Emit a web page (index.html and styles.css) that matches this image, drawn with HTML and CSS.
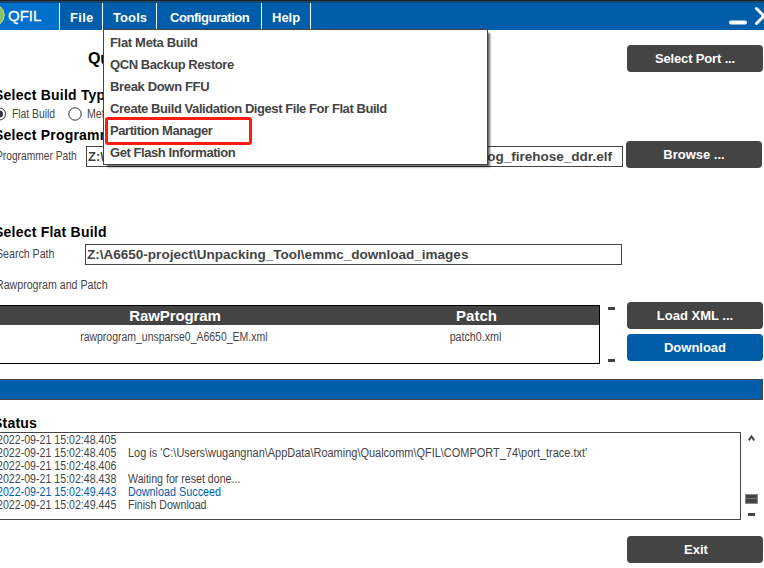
FILE: index.html
```html
<!DOCTYPE html>
<html lang="en">
<head>
<meta charset="utf-8">
<title>QFIL</title>
<link rel="stylesheet" href="styles.css">
</head>
<body>
<div class="window">
  <header class="titlebar">
    <div class="brand"><svg class="logo" width="5" height="26" viewBox="0 0 5 26"><ellipse cx="-5" cy="12" rx="9.5" ry="10.5" fill="#8dc163"/><path d="M0 4Q4 7 4.3 12Q4.300 17 0 21" fill="none" stroke="#b5d9a0"/></svg><span class="t-brand">QFIL</span></div>
    <nav class="menubar">
      <div class="menu m-file"><span>File</span></div>
      <div class="menu m-tools"><span>Tools</span>
        <div class="dropdown">
          <div class="item"><span class="d1">Flat Meta Build</span></div>
          <div class="item"><span class="d2">QCN Backup Restore</span></div>
          <div class="item"><span class="d3">Break Down FFU</span></div>
          <div class="item"><span class="d4">Create Build Validation Digest File For Flat Build</span></div>
          <div class="item marked"><span class="d5">Partition Manager</span></div>
          <div class="item"><span class="d6">Get Flash Information</span></div>
        </div>
      </div>
      <div class="menu m-conf"><span>Configuration</span></div>
      <div class="menu m-help"><span>Help</span></div>
    </nav>
    <svg class="controls" width="36" height="27" viewBox="0 0 36 27" fill="none" stroke="#fff" stroke-linecap="round"><path d="M3 19.500H17" stroke-width="4"/><path d="M28.500 5.500L36 13L28.500 20.500M43.500 5.500L36 13L43.500 20.500" stroke-width="3"/></svg>
  </header>

  <main class="page">
    <div class="row title-row"><h1>Qualcomm</h1><button class="btn b-port"><span>Select Port ...</span></button></div>
    <h2 class="h-type">Select Build Type</h2>
    <div class="row radios">
      <svg width="13" height="14" viewBox="0 0 13 14"><circle cx="6.500" cy="7" r="6" fill="#fff" stroke="#333"/><circle cx="6.500" cy="7" r="3.500" fill="#333"/></svg>
      <span class="r1 narrow">Flat Build</span>
      <svg width="14" height="14" viewBox="0 0 14 14"><circle cx="7" cy="7" r="6.200" fill="#fff" stroke="#333"/></svg>
      <span class="r2 narrow">Meta</span>
    </div>
    <h2 class="h-prog">Select Programmer</h2>
    <div class="row prog-row">
      <label class="l-prog"><span class="narrow">Programmer Path</span></label>
      <div class="field f-prog"><span>Z:\</span><span class="v-prog">prog_firehose_ddr.elf</span></div>
      <button class="btn b-browse"><span>Browse ...</span></button>
    </div>
    <h2 class="h-flat">Select Flat Build</h2>
    <div class="row search-row">
      <label class="l-search"><span class="narrow">Search Path</span></label>
      <div class="field f-search"><span class="v-search">Z:\A6650-project\Unpacking_Tool\emmc_download_images</span></div>
    </div>
    <div class="l-raw"><span class="narrow">Rawprogram and Patch</span></div>
    <div class="row table-row">
      <div class="table">
        <div class="thead"><span class="c1 th1">RawProgram</span><span class="c2 th2">Patch</span></div>
        <div class="trow"><span class="c1 td1">rawprogram_unsparse0_A6650_EM.xml</span><span class="c2 td2">patch0.xml</span></div>
      </div>
      <div class="ticks"><i class="tick"></i><i class="tick"></i></div>
      <div class="actions">
        <button class="btn b-load"><span>Load XML ...</span></button>
        <button class="btn blue b-down"><span>Download</span></button>
      </div>
    </div>
    <div class="progress"></div>
    <h2 class="h-status">Status</h2>
    <div class="row log-row">
      <div class="log">
        <div class="line"><time>2022-09-21 15:02:48.405</time></div>
        <div class="line"><time>2022-09-21 15:02:48.405</time><span class="narrow g1">Log is 'C:\Users\wugangnan\AppData\Roaming\Qualcomm\QFIL\COMPORT_74\port_trace.txt'</span></div>
        <div class="line"><time>2022-09-21 15:02:48.406</time></div>
        <div class="line"><time>2022-09-21 15:02:48.438</time><span class="narrow">Waiting for reset done...</span></div>
        <div class="line ok"><time>2022-09-21 15:02:49.443</time><span class="narrow g3">Download Succeed</span></div>
        <div class="line"><time>2022-09-21 15:02:49.445</time><span class="narrow">Finish Download</span></div>
      </div>
      <div class="scroll">
        <svg width="7" height="6" viewBox="0 0 7 6" fill="none" stroke="#444" stroke-width="2"><path d="M.8 5.300L3.500 1.500L6.200 5.300"/></svg>
        <i class="thumb"></i>
        <i class="tick"></i>
      </div>
    </div>
    <button class="btn b-exit"><span>Exit</span></button>
  </main>
</div>
</body>
</html>
```
FILE: styles.css
```css
*, *::after { box-sizing: border-box; }
body { margin: 0; background: #fff; color: #444; font-family: "Liberation Sans", sans-serif; }
.window { width: 764px; height: 568px; overflow: hidden; }
span, label, time, h1, h2 { white-space: nowrap; }
svg { display: block; flex: none; }

.titlebar { display: flex; height: 30px; background: #005daa; border-top: 1px solid #222; box-shadow: inset 0 2px #124875; padding-top: 2px; color: #fff; }
.brand { display: flex; width: 60px; background: #0070cc; border-right: 1px solid #fff; }
.t-brand { margin-left: 3px; line-height: 26px; font-size: 15px; -webkit-text-stroke: .3px #fff; }
.menubar { display: flex; flex: 1; font: bold 13px/28px "Liberation Sans", sans-serif; }
.menu { position: relative; border-right: 1px solid #fff; height: 27px; }
.menu > span { display: block; margin-top: 1px; }
.m-file { width: 43px; padding-left: 10px; letter-spacing: .3px; }
.m-tools { width: 54px; padding-left: 10px; letter-spacing: .1px; }
.m-conf { width: 105px; padding-left: 13px; letter-spacing: -.45px; }
.m-help { width: 49px; padding-left: 10px; }

.dropdown { position: absolute; z-index: 2; left: 0; top: 26px; width: 385px; height: 136px; padding: 2px 0 0 6px; background: #fff; border: 1px solid #444; box-shadow: 3px 3px 2px -1px rgba(0,0,0,.6); color: #444; line-height: 22px; letter-spacing: -.43px; }
.d1 { letter-spacing: -.32px; }
.d3 { letter-spacing: -.34px; }
.item { position: relative; height: 22px; }
.marked::after { content: ""; position: absolute; left: -5px; top: -3px; width: 147px; height: 28px; border: 3px solid #fc1c10; border-radius: 3px; }

.page { display: flex; flex-direction: column; padding-top: 15px; }
.row { display: flex; }
h1, h2 { margin: 0; color: #000; font-weight: bold; }
h1 { width: 627px; padding-left: 88px; font-size: 16px; line-height: 27px; letter-spacing: -.3px; }
h2 { margin-left: -6px; height: 18px; font-size: 14px; line-height: 18px; letter-spacing: .22px; }
.h-type { margin-top: 14px; }
.btn { flex: none; width: 136px; height: 27px; border: 0; border-radius: 4px; padding: 0; background: #444; color: #fff; font: bold 13px/27px "Liberation Sans", sans-serif; }
.b-port { letter-spacing: -.15px; }
.blue { background: #005daa; }
.radios { height: 18px; margin: 1px 0 0 -7px; align-items: center; font-size: 12px; line-height: 18px; }
.narrow { display: inline-block; transform: scaleX(.885); transform-origin: left; }
.g1 { transform: scaleX(.9135); }
.g3 { transform: scaleX(.9); }
.r1 { width: 50px; margin-left: 6px; margin-right: 6px; transform: scaleX(.86); }
.r2 { margin-left: 5px; }
.h-prog { margin-top: 3px; }
.h-prog + .row { margin-top: -3px; }
label { font-size: 12px; line-height: 20px; margin-left: -4px; }
.prog-row { height: 27px; }
.l-prog { width: 90px; padding-top: 5px; }
.l-prog .narrow { transform: scaleX(.853); }
.field { display: flex; height: 21px; border: 1px solid #444; padding: 0 1px; font: bold 13px/19px "Liberation Sans", sans-serif; background: #fff; }
.f-prog { width: 537px; justify-content: space-between; margin: 5px 3px 0 0; padding-right: 10px; }
.v-prog { transform: scaleX(1.04); transform-origin: right; }
.v-search { transform: scaleX(1.04); transform-origin: left; }
.h-flat { margin-top: 55px; }
.search-row { margin-top: 3px; height: 21px; }
.l-search { width: 89px; }
.f-search { width: 537px; }
.l-raw { height: 18px; margin: 11px 0 0 -4px; font-size: 12px; line-height: 18px; }
.table-row { height: 59px; margin-top: 8px; }
.table { width: 600px; height: 59px; margin-top: 3px; border: 1px solid #000; border-left: 0; }
.thead { display: flex; height: 19px; background: #444; color: #fff; font: bold 15px/20px "Liberation Sans", sans-serif; }
.trow { display: flex; font-size: 12px; line-height: 24px; }
.c1 { width: 352px; text-align: center; }
.c2 { width: 247px; text-align: center; }
.th1 { letter-spacing: -.1px; padding-right: 2px; }
.th2 { padding-left: 2px; }
.td1 { padding-right: 5px; transform: scaleX(.872); }
.td2 { transform: scaleX(.89); }
.ticks { display: flex; flex-direction: column; justify-content: space-between; width: 27px; padding: 5px 0 0 8px; height: 60px; }
.tick { display: block; width: 7px; height: 3px; background: #444; }
.actions { display: flex; flex-direction: column; gap: 5px; }
.progress { width: 763px; height: 21px; margin-top: 18px; background: #005daa; border: 1px solid #444; border-left: 0; }
.h-status { margin-top: 14px; margin-left: -7px; }
.log-row { height: 88px; }
.log { width: 741px; height: 88px; border: 1px solid #444; border-left: 0; font-size: 12px; line-height: 13px; padding-top: 1px; }
.line { display: flex; height: 13px; }
.line time { flex: none; width: 135px; margin: 0 -4px 0 -3px; transform: scaleX(.885); transform-origin: left; }
.ok { color: #005daa; }
.scroll { display: flex; flex-direction: column; align-items: center; width: 21px; padding-top: 3px; }
.thumb { width: 13px; height: 10px; margin-top: 53px; background: #444; border: 1px solid #888; box-shadow: inset 0 3px #444, inset 0 4px #777; }
.scroll .tick { margin-top: 9px; }
.b-exit { margin: 16px 0 0 627px; padding-left: 2px; }
```
